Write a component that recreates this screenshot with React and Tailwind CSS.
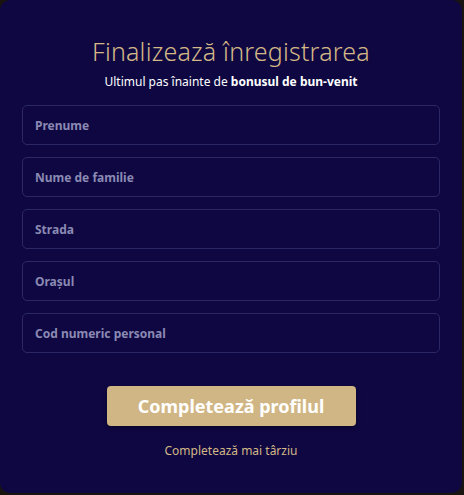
import React from "react";

const fields = ["Prenume", "Nume de familie", "Strada", "Orașul", "Cod numeric personal"];

export default function App() {
  return (
    <div className="w-[464px] h-[495px] bg-[#1a1410] font-['Noto_Sans',sans-serif]">
      <div className="w-[462px] h-[493px] rounded-[10px] bg-[#0e0742] flex flex-col items-center pt-[35px]">
        {/* Header */}
        <h1 className="text-[25px] leading-[32px] font-light text-[#d4b886] tracking-[0.2px]">
          Finalizează înregistrarea
        </h1>
        <p className="mt-[7px] text-[12px] leading-[16px] text-white">
          Ultimul pas înainte de <span className="font-bold">bonusul de bun-venit</span>
        </p>

        {/* Fields */}
        <div className="mt-[15px] w-[418px] flex flex-col gap-[12px]">
          {fields.map((f) => (
            <input
              key={f}
              placeholder={f}
              className="h-[40px] w-full rounded-[5px] border border-[#2c2866] bg-transparent px-[12px] text-[12px] font-bold text-white placeholder:text-[#8b8ab3] outline-none"
            />
          ))}
        </div>

        {/* Actions */}
        <button className="mt-[33px] w-[249px] h-[40px] rounded-[4px] bg-[#d1b685] text-white text-[18px] font-bold shadow-[0_2px_4px_rgba(0,0,0,0.35)]">
          Completează profilul
        </button>
        <button className="mt-[16px] text-[12px] text-[#d4b886]">Completează mai târziu</button>
      </div>
    </div>
  );
}
